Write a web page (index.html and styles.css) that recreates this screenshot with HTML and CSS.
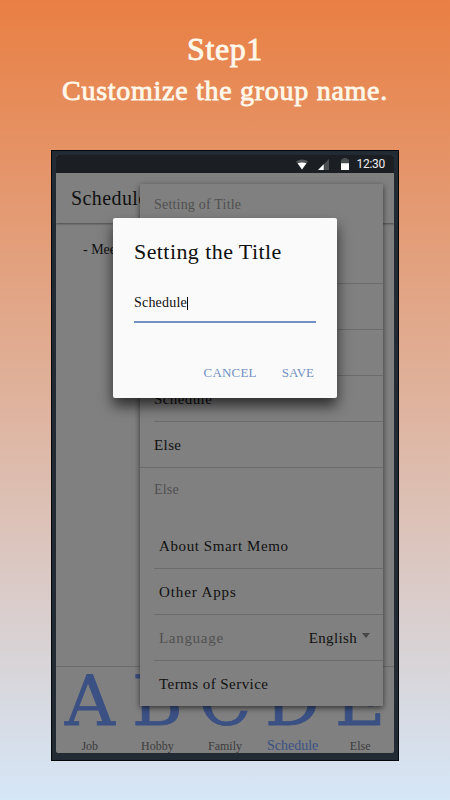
FILE: index.html
```html
<!DOCTYPE html>
<html lang="en">
<head>
    <meta charset="UTF-8">
    <meta name="viewport" content="width=device-width, initial-scale=1.0">
    <title>Smart Memo</title>
    <link rel="stylesheet" href="styles.css">
</head>
<body>
    <div class="page">
        <!-- Caption -->
        <h1 class="step">Step1</h1>
        <p class="caption">Customize the group name.</p>

        <!-- Phone -->
        <div class="phone">
            <div class="screen">
                <div class="status-bar">
                    <svg class="wifi" width="12" height="11" viewBox="0 0 12 11">
                        <path d="M0 2.5Q6-1.6 12 2.5L6 10.5z" fill="#55585b" />
                        <path d="M1.6 4.2Q6 2.6 10.4 4.2L6 10.5z" fill="#fff" />
                    </svg>
                    <svg class="signal" width="11" height="11" viewBox="0 0 11 11">
                        <path d="M0 11L11 0v11z" fill="#4c4f52" />
                        <path d="M0 11L5.7 5.3V11z" fill="#fff" />
                    </svg>
                    <svg class="battery" width="8" height="12" viewBox="0 0 8 12">
                        <path d="M0 1.2h2V0h4v1.2h2V6H0z" fill="#4c4f52" />
                        <path d="M0 5.3h8V12H0z" fill="#fff" />
                    </svg>
                    <span class="clock">12:30</span>
                </div>

                <div class="app-bar">Schedule</div>
                <div class="memo">- Mee</div>

                <div class="tabs">
                    <div class="tab"><span class="letter">A</span><span class="tab-name">Job</span></div>
                    <div class="tab"><span class="letter">B</span><span class="tab-name">Hobby</span></div>
                    <div class="tab"><span class="letter">C</span><span class="tab-name">Family</span></div>
                    <div class="tab active"><span class="letter">D</span><span class="tab-name">Schedule</span></div>
                    <div class="tab"><span class="letter">E</span><span class="tab-name">Else</span></div>
                </div>

                <!-- Settings menu -->
                <div class="menu">
                    <div class="menu-title">Setting of Title</div>
                    <div class="menu-item"></div>
                    <div class="menu-item"></div>
                    <div class="menu-item"></div>
                    <div class="menu-item">Schedule</div>
                    <div class="menu-item last">Else</div>
                    <div class="menu-title other">Else</div>
                    <div class="menu-item link about">About Smart Memo</div>
                    <div class="menu-item link apps">Other Apps</div>
                    <div class="menu-item link language">
                        <span class="muted">Language</span>
                        <span class="value">English</span>
                        <span class="arrow"></span>
                    </div>
                    <div class="menu-item link terms">Terms of Service</div>
                </div>

                <!-- Title dialog -->
                <div class="dialog">
                    <h2>Setting the Title</h2>
                    <div class="field">Schedule<span class="cursor"></span></div>
                    <div class="actions">
                        <span class="cancel">CANCEL</span>
                        <span class="save">SAVE</span>
                    </div>
                </div>
            </div>
        </div>
    </div>
</body>
</html>
```
FILE: styles.css
```css
:root {
    --surface: #808080;
    --ink: #101010;
    --muted: #505050;
    --line: #6b6b6b;
    --blue: #7390c5;
    --dark-blue: #3b5083;
}

* {
    box-sizing: border-box;
}

body {
    margin: 0;
    font-family: "Liberation Serif", serif;
    color: var(--ink);
}

.page {
    height: 800px;
    padding-top: 30px;
    overflow: hidden;
    background: linear-gradient(#e97f43, #d5e6f7);
}

/* Caption */
.step,
.caption {
    margin: 0;
    text-align: center;
    font-weight: 400;
    color: #fff8ea;
    -webkit-text-stroke: 0.8px #fff8ea;
}

.step {
    font-size: 32px;
    line-height: 38px;
    letter-spacing: 0.6px;
}

.caption {
    margin-top: 3px;
    font-size: 28px;
    line-height: 40px;
    letter-spacing: 0.72px;
}

/* Phone */
.phone {
    width: 348px;
    height: 611px;
    margin: 39px 0 0 51px;
    padding: 4px 4px 7px;
    border: 1px solid #05080b;
    background: #222b33;
}

.screen {
    position: relative;
    display: flex;
    flex-direction: column;
    height: 598px;
    border-radius: 2px;
    background: var(--surface);
    overflow: hidden;
}

.status-bar {
    display: flex;
    align-items: center;
    justify-content: flex-end;
    height: 18px;
    padding-right: 9px;
    background: #1b1e22;
    color: #eee;
}

.signal {
    margin-left: 10px;
}

.battery {
    margin-left: 12px;
}

.clock {
    margin-left: 8px;
    font: 12px/18px Roboto, sans-serif;
    letter-spacing: -0.3px;
}

.app-bar {
    height: 50px;
    padding-left: 15px;
    font-size: 20px;
    line-height: 51px;
    letter-spacing: 0.4px;
    box-shadow: 0 1px 2px rgba(0, 0, 0, 0.4);
}

.memo {
    padding: 18px 0 0 27px;
    font-size: 14px;
    line-height: 18px;
}

/* Bottom tabs */
.tabs {
    display: grid;
    grid-template-columns: repeat(5, 1fr);
    height: 87px;
    margin-top: auto;
    border-top: 1px solid var(--line);
}

.tab {
    display: flex;
    flex-direction: column;
    align-items: center;
}

.letter {
    height: 70px;
    font-family: "DejaVu Serif", serif;
    font-size: 69px;
    line-height: 68px;
    color: var(--dark-blue);
    -webkit-text-stroke: 0.8px var(--dark-blue);
}

.tab-name {
    font-size: 12px;
    line-height: 18px;
    color: #3c3c3c;
}

.active .tab-name {
    font-size: 14px;
    line-height: 17px;
    color: var(--dark-blue);
}

/* Settings menu */
.menu {
    position: absolute;
    top: 29px;
    left: 84px;
    width: 243px;
    height: 522px;
    background: var(--surface);
    box-shadow: 0 2px 6px rgba(0, 0, 0, 0.6);
}

.menu-title {
    height: 54px;
    padding-left: 14px;
    font-size: 14px;
    line-height: 42px;
    letter-spacing: 0.2px;
    color: var(--muted);
}

.menu-title.other {
    height: 55px;
    line-height: 44px;
}

.menu-item {
    height: 46px;
    margin-left: 14px;
    border-bottom: 1px solid var(--line);
    font-size: 15px;
    line-height: 46px;
    letter-spacing: 0.4px;
}

.menu-item.last {
    margin-left: 0;
    padding-left: 14px;
}

.menu-item.link {
    padding-left: 5px;
}

.about {
    letter-spacing: 0.6px;
}

.apps {
    letter-spacing: 0.9px;
}

.language {
    display: flex;
    letter-spacing: 0.7px;
}

.muted {
    color: var(--muted);
}

.value {
    margin-left: auto;
    letter-spacing: 0.35px;
}

.arrow {
    margin: 18px 13px 0 5px;
    height: 0;
    border: 4px solid transparent;
    border-top: 5px solid #484848;
    border-bottom: 0;
}

.menu-item.terms {
    border-bottom: 0;
    letter-spacing: 0.45px;
}

/* Title dialog */
.dialog {
    position: absolute;
    top: 63px;
    left: 57px;
    width: 224px;
    height: 180px;
    padding: 20px 21px 0;
    border-radius: 2px;
    background: #fafafa;
    box-shadow: 0 8px 14px rgba(0, 0, 0, 0.65);
}

.dialog h2 {
    margin: 0;
    font-size: 22px;
    font-weight: 400;
    line-height: 28px;
    letter-spacing: 0.42px;
}

.field {
    display: flex;
    align-items: center;
    height: 36px;
    margin-top: 21px;
    padding-bottom: 2px;
    border-bottom: 2px solid var(--blue);
    font-size: 14px;
    letter-spacing: 0.2px;
}

.cursor {
    width: 1px;
    height: 13px;
    background: #000;
}

.actions {
    display: flex;
    justify-content: flex-end;
    gap: 25px;
    margin-top: 40px;
    padding-right: 2px;
    font-size: 13px;
    line-height: 20px;
    color: var(--blue);
}

.cancel {
    letter-spacing: 0.2px;
}
```
